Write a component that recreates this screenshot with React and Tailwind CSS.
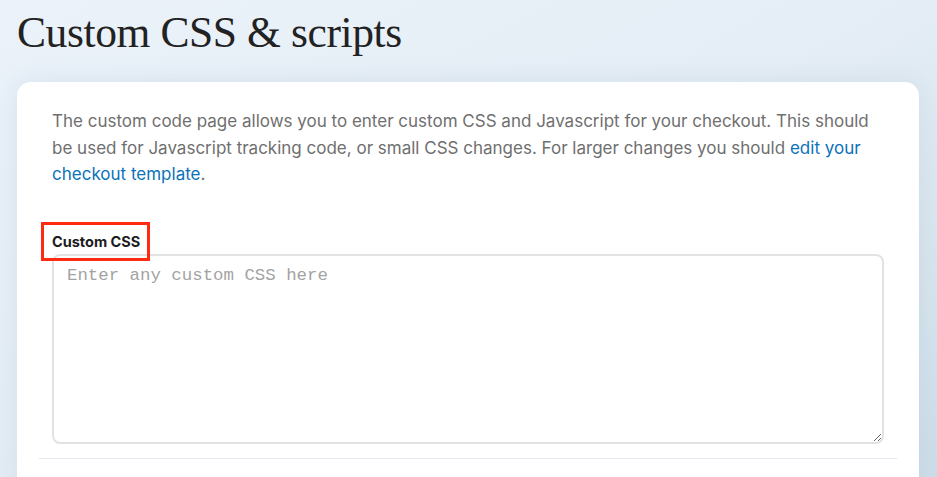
export default function App() {
  return (
    <div className="min-h-[477px] w-full overflow-hidden bg-gradient-to-br from-[#ebf2fa] via-[#e4edf5] to-[#ccdde8] pl-[17px] pr-[18px]">
      <h1 className="pt-[8px] text-[43.5px] leading-[48px] tracking-[-0.4px] text-[#222]" style={{ fontFamily: '"Liberation Serif", "DejaVu Serif", serif' }}>
        Custom CSS &amp; scripts
      </h1>
      <div className="mt-[26px] rounded-[14px] bg-white px-[22px] pb-[40px] shadow-[0_0_24px_rgba(160,185,205,0.25)]" style={{ fontFamily: 'Inter, "Noto Sans", sans-serif' }}>
        <div className="px-[13px] pt-[26px]">
          <p className="text-[17px] leading-[26.5px] text-[#6f6f6f]">
            The custom code page allows you to enter custom CSS and Javascript for your checkout. This should be used for Javascript tracking code, or small CSS changes. For larger changes you should{' '}
            <a href="#" className="text-[#0b72b9]">edit your checkout template</a>.
          </p>
          <div className="mt-[41px]">
            <div className="relative inline-block">
              <label className="block text-[14.5px] font-bold leading-[20px] text-[#1c1c1c]">Custom CSS</label>
              <span className="absolute -left-[11px] -top-[10px] h-[39px] w-[109px] border-[3px] border-[#ff2a12]"></span>
            </div>
            <textarea
              className="mt-[1px] block h-[190px] w-full resize-y rounded-[8px] border-2 border-[#e2e2e2] px-[13px] py-[8px] text-[17.4px] leading-[24px] text-[#333] placeholder:text-[#a3a3a3] outline-none"
              style={{ fontFamily: '"Liberation Mono", "DejaVu Sans Mono", monospace' }}
              placeholder="Enter any custom CSS here"
            />
          </div>
        </div>
        <div className="mt-[14px] h-px bg-[#e3e9ef]"></div>
      </div>
    </div>
  );
}
